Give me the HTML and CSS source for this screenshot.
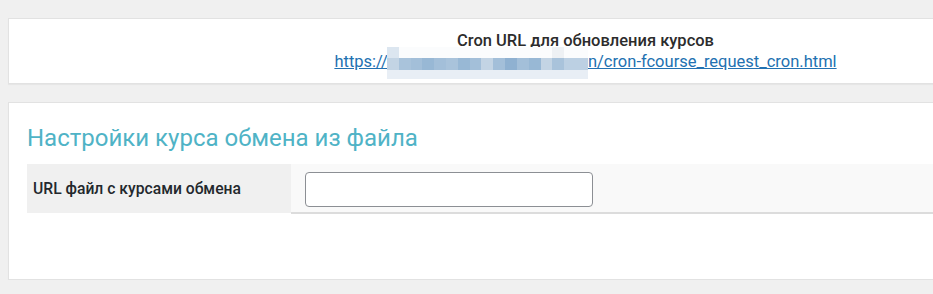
FILE: index.html
```html
<!DOCTYPE html>
<html lang="ru">
<head>
<meta charset="utf-8">
<title>Cron</title>
<link rel="stylesheet" href="styles.css">
</head>
<body>
<div class="page">
  <div class="panel cron-panel">
    <div class="cron-title">Cron URL для обновления курсов</div>
    <a class="cron-link" href="#">https://<span class="redact"><span class="mosaic"><i class="c1"></i><i class="c0"></i><i class="c0"></i><i class="c0"></i><i class="c0"></i><i class="c0"></i><i class="c0"></i><i class="c0"></i><i class="c0"></i><i class="c0"></i><i class="c0"></i><i class="c0"></i><i class="c0"></i><i class="c0"></i><i class="c2"></i><i class="c0"></i><i class="c0"></i><i class="m1"></i><i class="m2"></i><i class="m3"></i><i class="m4"></i><i class="m3"></i><i class="m2"></i><i class="m4"></i><i class="m3"></i><i class="m1"></i><i class="m3"></i><i class="m5"></i><i class="m3"></i><i class="m4"></i><i class="m1"></i><i class="m2"></i><i class="m6"></i><i class="m6"></i><i class="b1"></i><i class="b1"></i><i class="b1"></i><i class="b1"></i><i class="b1"></i><i class="b1"></i><i class="b1"></i><i class="b1"></i><i class="b1"></i><i class="b1"></i><i class="b1"></i><i class="b1"></i><i class="b1"></i><i class="b1"></i><i class="b1"></i><i class="b1"></i><i class="b1"></i></span></span>n/cron-fcourse_request_cron.html</a>
  </div>
  <div class="panel settings-panel">
    <h2 class="settings-title">Настройки курса обмена из файла</h2>
    <table class="form-table">
      <tr>
        <th class="label-cell">URL файл с курсами обмена</th>
        <td class="field-cell"><input class="text-input" type="text"></td>
      </tr>
    </table>
  </div>
</div>
</body>
</html>
```
FILE: styles.css
```css
html, body {
  margin: 0;
  padding: 0;
  background: #f0f0f0;
  overflow: hidden;
}
body {
  font-family: Roboto, "Liberation Sans", Arial, sans-serif;
  color: #333;
}
.page {
  padding: 18px 0 0 8px;
  display: flex;
  flex-direction: column;
  gap: 18px;
  width: 1155px;
}
.panel {
  background: #fff;
  border: 1px solid #e2e2e2;
  box-shadow: 0 1px 1px rgba(0, 0, 0, 0.04);
}
.cron-panel {
  height: 66px;
  box-sizing: border-box;
  text-align: center;
  padding-top: 11px;
}
.cron-title {
  font-size: 16.5px;
  font-weight: 500;
  line-height: 21px;
  color: #2c2c2c;
}
.cron-link {
  font-size: 16.5px;
  line-height: 21px;
  color: #2271b1;
  text-decoration: underline;
}
.redact {
  display: inline-block;
  width: 200px;
  height: 14px;
  position: relative;
  vertical-align: baseline;
}
.mosaic {
  position: absolute;
  left: -1px;
  top: -6px;
  width: 201px;
  display: grid;
  grid-template-columns: repeat(17, 1fr);
  grid-template-rows: 11px 12px 9px;
}
.mosaic i { display: block; }
.c0 { background: #fbfcfd; }
.c1 { background: #dce6f0; }
.c2 { background: #eef1f4; }
.m1 { background: #c3d4e4; }
.m2 { background: #a9c3db; }
.m3 { background: #a3bfd9; }
.m4 { background: #98b8d5; }
.m5 { background: #8fb1d1; }
.m6 { background: #bcd0e3; }
.b1 { background: #e8eef5; }
.settings-panel {
  padding: 18px 0 66px 18px;
  height: 178px;
  box-sizing: border-box;
}
.settings-title {
  margin: 0 0 9px;
  font-size: 24px;
  font-weight: 400;
  line-height: 34px;
  color: #4fb3c6;
}
.form-table {
  border-collapse: collapse;
  width: 100%;
}
.label-cell {
  width: 264px;
  box-sizing: border-box;
  background: #f0f0f0;
  text-align: left;
  font-size: 15.7px;
  font-weight: 500;
  color: #23282d;
  padding: 0 6px;
  height: 49px;
}
.field-cell {
  background: #f9f9f9;
  padding: 7px 14px 5px;
  border-bottom: 2px solid #dcdcdc;
}
.text-input {
  display: block;
  width: 288px;
  height: 35px;
  box-sizing: border-box;
  border: 1px solid #8c8f94;
  border-radius: 4px;
  background: #fff;
  margin: 0;
}
```
